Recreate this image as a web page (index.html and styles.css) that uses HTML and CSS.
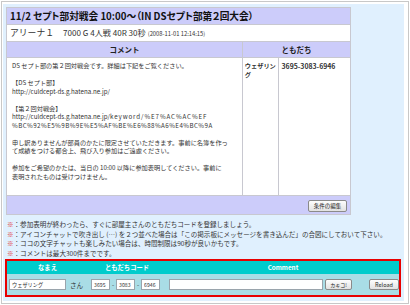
FILE: index.html
```html
<!DOCTYPE html>
<html lang="ja">
<head>
<meta charset="utf-8">
<link rel="stylesheet" href="styles.css">
</head>
<body>
<div class="page">
  <div class="panel">
    <table class="event">
      <colgroup><col class="c1"><col class="c2"><col class="c3"></colgroup>
      <tr><td colspan="3" class="title">11/2 セプト部対戦会 10:00～（IN DSセプト部第２回大会）</td></tr>
      <tr><td colspan="3" class="info"><span class="arena">アリーナ１</span><span class="rule">7000 G 4人戦 40R 30秒</span><span class="date">(2008-11-01 12:14:15)</span></td></tr>
      <tr class="head"><th>コメント</th><th colspan="2">ともだち</th></tr>
      <tr class="body">
        <td class="comment">
          <div>DS セプト部の第２回対戦会です。詳細は下記をご覧ください。</div>
          <div>&nbsp;</div>
          <div>【DS セプト部】</div>
          <div>http://culdcept-ds.g.hatena.ne.jp/</div>
          <div>&nbsp;</div>
          <div>【第２回対戦会】</div>
          <div>http://culdcept-ds.g.hatena.ne.jp/<span class="enc">keyword/%E7%AC%AC%EF</span></div>
          <div class="enc2">%BC%92%E5%9B%9E%E5%AF%BE%E6%88%A6%E4%BC%9A</div>
          <div>&nbsp;</div>
          <div>申し訳ありませんが部員のかたに限定させていただきます。事前に名簿を作っ</div>
          <div>て成績をつける都合上、飛び入り参加はご遠慮ください。</div>
          <div>&nbsp;</div>
          <div>参加をご希望のかたは、当日の 10:00 以降に参加表明してください。事前に</div>
          <div>表明されたものは受けつけません。</div>
        </td>
        <td class="fname">ウェザリング</td>
        <td class="fcode">3695-3083-6946</td>
      </tr>
      <tr class="foot"><td colspan="3"><button class="btn" type="button">条件の編集</button></td></tr>
    </table>
    <ul class="notes">
      <li><span class="mark">※</span>：参加表明が終わったら、すぐに部屋主さんのともだちコードを登録しましょう。</li>
      <li><span class="mark">※</span>：アイコンチャットで吹き出し (…) を２つ並べた場合は「この掲示板にメッセージを書き込んだ」の合図にしておいて下さい。</li>
      <li><span class="mark">※</span>：ココの文字チャットも楽しみたい場合は、時間制限は90秒が良いかもです。</li>
      <li><span class="mark">※</span>：コメントは最大300件までです。</li>
    </ul>
    <form class="post">
      <div class="post-head">
        <span class="h-name">なまえ</span>
        <span class="h-code">ともだちコード</span>
        <span class="h-comment">Comment</span>
      </div>
      <div class="post-row">
        <input class="in-name" type="text" value="ウェザリング">
        <span class="san">さん</span>
        <input class="in-code" type="text" value="3695">
        <span class="dash">-</span>
        <input class="in-code" type="text" value="3083">
        <span class="dash">-</span>
        <input class="in-code" type="text" value="6946">
        <input class="in-comment" type="text" value="">
        <button class="btn btn-post" type="button">カキコ!</button>
        <button class="btn btn-reload" type="button">Reload</button>
      </div>
    </form>
  </div>
</div>
</body>
</html>
```
FILE: styles.css
```css
* { box-sizing: border-box; }
body {
  margin: 0;
  background: #ffffff;
  font-family: "Noto Sans CJK JP", "DejaVu Sans", sans-serif;
  color: #222;
}
.page {
  margin: 1px;
  width: 408px;
  height: 303px;
  border: 1px solid #c8c8c8;
  padding: 2px 3px 1px 1px;
}
.panel {
  width: 401px;
  height: 297px;
  background: #e0f0fe;
  padding: 3px 3px 0 3px;
  overflow: hidden;
}
.event {
  width: 345px;
  border-collapse: collapse;
  border: 1px solid #b8b8c8;
  background: #fff;
  font-size: 7px;
  line-height: 8px;
}
.c1 { width: 236px; }
.c2 { width: 36px; }
.c3 { width: 73px; }
.event td, .event th {
  padding: 0;
  border: 1px solid #c8c8d0;
}
.title {
  background: #ccccfa;
  height: 17px;
  padding: 0 0 0 3px !important;
  font-size: 9.7px;
  line-height: 12px;
  font-weight: bold;
  color: #111;
  white-space: nowrap;
  font-feature-settings: "palt";
}
.info {
  height: 17px;
  padding: 0 0 0 3px !important;
  white-space: nowrap;
  color: #333;
  line-height: 12px;
}
.arena { font-size: 8.8px; margin-right: 9px; }
.rule { font-size: 8.1px; margin-right: 2px; }
.date { font-size: 5.8px; }
.head th {
  background: #ccccfa;
  height: 16px;
  font-size: 7.5px;
  line-height: 10px;
  font-weight: bold;
  color: #222;
}
.body td { vertical-align: top; }
.comment {
  height: 138px;
  padding: 4px 0 10px 5px !important;
  font-size: 6.2px;
  line-height: 8.5px;
  white-space: nowrap;
  overflow: hidden;
  color: #333;
}
.enc { letter-spacing: 0.9px; }
.enc2 { letter-spacing: 0.45px; }
.fname {
  padding: 4px 1px 0 2px !important;
  font-size: 6.2px;
  line-height: 8.5px;
  font-weight: bold;
  color: #333;
}
.fcode {
  padding: 4px 0 0 3px !important;
  font-size: 6.9px;
  line-height: 8.5px;
  font-weight: bold;
  color: #333;
}
.foot td {
  background: #ccccfa;
  height: 19px;
  text-align: right;
  padding: 0 3px 0 0 !important;
  line-height: 12px;
}
.btn {
  font-family: "Noto Sans CJK JP", "DejaVu Sans", sans-serif;
  font-size: 5.5px;
  height: 12px;
  padding: 0 2px;
  border: 1px solid #8a8a8a;
  border-radius: 2px;
  background: linear-gradient(#fdfdfd, #e2e2e2);
  color: #222;
  line-height: 10px;
  vertical-align: middle;
  white-space: nowrap;
}
.foot .btn { width: 39px; }
.notes {
  list-style: none;
  margin: 5px 0 0 0;
  padding: 0 0 0 1px;
  font-size: 6.55px;
  line-height: 9.6px;
  color: #333;
  white-space: nowrap;
}
.mark { color: #e03030; }
.post {
  margin: 1px 0 0 -1px;
  width: 396px;
  border: 2px solid #e80000;
}
.post-head {
  background: #00cccc;
  height: 13px;
  display: flex;
  align-items: center;
  color: #fff;
  font-size: 6.3px;
  line-height: 8px;
  font-weight: bold;
}
.h-name { width: 80px; text-align: center; padding-left: 1px; }
.h-code { width: 80px; text-align: center; }
.h-comment { flex: 1; text-align: center; }
.post-row {
  background: #a9dde6;
  height: 21px;
  display: flex;
  align-items: center;
  padding: 0 0 0 2px;
  font-size: 6.2px;
  line-height: 8px;
  color: #333;
}
.post-row input {
  height: 11px;
  border: 1px solid #9aa4ac;
  background: #fff;
  font-family: "Noto Sans CJK JP", "DejaVu Sans", sans-serif;
  font-size: 5.2px;
  padding: 0 2px;
  color: #333;
}
.in-name { width: 57px; }
.san { margin: 0 8px 0 4px; font-size: 6.5px; }
.in-code { width: 19px; }
.dash { width: 6px; text-align: center; }
.in-comment { width: 154px; margin-left: 9px; }
.btn-post { width: 27px; margin-left: 2px; height: 11px; font-size: 5px; padding: 0; }
.btn-reload { width: 30px; margin-left: 17px; height: 11px; }
```
